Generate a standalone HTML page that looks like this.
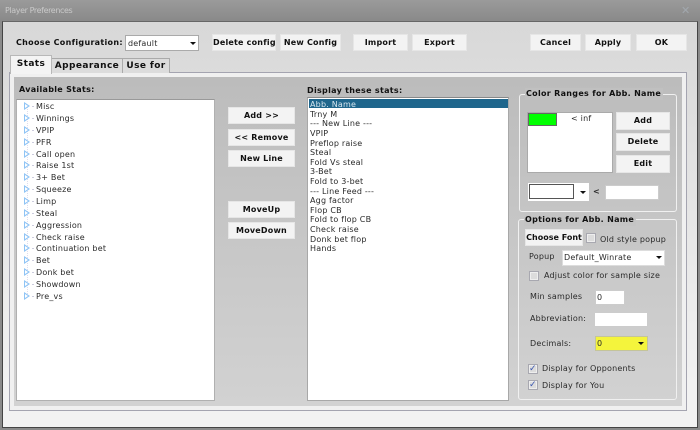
<!DOCTYPE html>
<html><head><meta charset="utf-8"><style>
html,body{margin:0;padding:0;width:700px;height:430px;overflow:hidden;background:#8c8c8c}
body{position:relative;font-family:"DejaVu Sans",sans-serif;font-size:8px;color:#2a2a2a;filter:blur(.3px)}
div{position:absolute;box-sizing:border-box}
.t{white-space:nowrap;line-height:12px;height:12px;margin-top:1px;font-size:8px;letter-spacing:.2px}
.b{font-weight:bold;color:#111;letter-spacing:.3px}
.btn{background:#f3f3f3;border:1px solid #e6e6e6;text-align:center;font-weight:bold;color:#111;white-space:nowrap;font-size:8px;letter-spacing:.2px;line-height:16px}
.ck{width:10px;height:10px;background:#dcdcdc;border:1px solid #a8a8b0;box-shadow:inset 0 0 0 1px #eee}
.ar{width:0;height:0;border-left:3.5px solid transparent;border-right:3.5px solid transparent;border-top:3.5px solid #111}
.tri{width:0;height:0;border-top:4.5px solid transparent;border-bottom:4.5px solid transparent;border-left:6px solid #8fc4f5}
.tri:after{content:"";position:absolute;left:-5px;top:-2.5px;border-top:2.5px solid transparent;border-bottom:2.5px solid transparent;border-left:3.5px solid #fff}
.tri:before{content:"";position:absolute;left:2px;top:0;width:2px;height:1px;background:#ccd}
.in{background:#fff;border:1px solid #b4b4b4}
.tab{background:#dcdcdc;border:1px solid #aaa;border-bottom:0;border-left:0;text-align:center;font-weight:bold;color:#111;line-height:15px;letter-spacing:.4px;font-size:9px;white-space:nowrap}
</style></head><body>
<div style="left:0;top:0;width:700px;height:430px;background:linear-gradient(#9a9a9a,#8a8a8a 20px,#8a8a8a)"></div>
<div class="t" style="left:5px;top:4px;color:#c9c9c9;letter-spacing:-.4px">Player Preferences</div>
<div class="t" style="left:681px;top:4px;color:#a2a8ae;font-size:11px;font-weight:bold">✕</div>
<div style="left:2px;top:21px;width:696px;height:407px;background:linear-gradient(#d8d8d8,#f2f2f2 90%);border:1px solid #444;border-top:1px solid #666"></div>

<div class="t b" style="left:16px;top:36px">Choose Configuration:</div>
<div class="in" style="left:125px;top:35px;width:74px;height:16px;border-color:#aaa"></div>
<div class="t" style="left:128px;top:37px">default</div>
<div class="ar" style="left:190px;top:42px"></div>
<div class="btn" style="left:212px;top:34px;width:64px;height:17px">Delete config</div>
<div class="btn" style="left:280px;top:34px;width:61px;height:17px">New Config</div>
<div class="btn" style="left:353px;top:34px;width:55px;height:17px">Import</div>
<div class="btn" style="left:412px;top:34px;width:55px;height:17px">Export</div>
<div class="btn" style="left:530px;top:34px;width:51px;height:17px">Cancel</div>
<div class="btn" style="left:585px;top:34px;width:46px;height:17px">Apply</div>
<div class="btn" style="left:636px;top:34px;width:51px;height:17px">OK</div>

<div style="left:9px;top:72px;width:678px;height:339px;background:#f0f0f0;border:1px solid #a4a4b0"></div>
<div style="left:14px;top:77px;width:668px;height:329px;background:linear-gradient(#bcbcbc,#d2d2d2)"></div>
<div class="tab" style="left:10px;top:55px;width:42px;height:19px;background:#f4f4f4;border:1px solid #b8b8b8;border-bottom:0;line-height:17px">Stats</div>
<div class="tab" style="left:52px;top:58px;width:71px;height:15px">Appearance</div>
<div class="tab" style="left:123px;top:58px;width:47px;height:15px">Use for</div>

<div class="t b" style="left:19px;top:83px">Available Stats:</div>
<div style="left:16px;top:99px;width:199px;height:302px;background:#fff;border:1px solid #b0b0b0;border-top-color:#999"></div>
<div style="left:27px;top:106px;width:0;height:190px;border-left:1px dotted #dde"></div>

<div class="tri" style="left:24px;top:102px"></div><div class="t" style="left:36px;top:100px">Misc</div>
<div class="tri" style="left:24px;top:114px"></div><div class="t" style="left:36px;top:112px">Winnings</div>
<div class="tri" style="left:24px;top:126px"></div><div class="t" style="left:36px;top:124px">VPIP</div>
<div class="tri" style="left:24px;top:138px"></div><div class="t" style="left:36px;top:136px">PFR</div>
<div class="tri" style="left:24px;top:150px"></div><div class="t" style="left:36px;top:148px">Call open</div>
<div class="tri" style="left:24px;top:161px"></div><div class="t" style="left:36px;top:159px">Raise 1st</div>
<div class="tri" style="left:24px;top:173px"></div><div class="t" style="left:36px;top:171px">3+ Bet</div>
<div class="tri" style="left:24px;top:185px"></div><div class="t" style="left:36px;top:183px">Squeeze</div>
<div class="tri" style="left:24px;top:197px"></div><div class="t" style="left:36px;top:195px">Limp</div>
<div class="tri" style="left:24px;top:209px"></div><div class="t" style="left:36px;top:207px">Steal</div>
<div class="tri" style="left:24px;top:221px"></div><div class="t" style="left:36px;top:219px">Aggression</div>
<div class="tri" style="left:24px;top:233px"></div><div class="t" style="left:36px;top:231px">Check raise</div>
<div class="tri" style="left:24px;top:244px"></div><div class="t" style="left:36px;top:242px">Continuation bet</div>
<div class="tri" style="left:24px;top:256px"></div><div class="t" style="left:36px;top:254px">Bet</div>
<div class="tri" style="left:24px;top:268px"></div><div class="t" style="left:36px;top:266px">Donk bet</div>
<div class="tri" style="left:24px;top:280px"></div><div class="t" style="left:36px;top:278px">Showdown</div>
<div class="tri" style="left:24px;top:292px"></div><div class="t" style="left:36px;top:290px">Pre_vs</div>

<div class="btn" style="left:228px;top:107px;width:67px;height:17px">Add &gt;&gt;</div>
<div class="btn" style="left:228px;top:129px;width:67px;height:17px">&lt;&lt; Remove</div>
<div class="btn" style="left:228px;top:150px;width:67px;height:17px">New Line</div>
<div class="btn" style="left:228px;top:201px;width:67px;height:17px">MoveUp</div>
<div class="btn" style="left:228px;top:222px;width:67px;height:17px">MoveDown</div>

<div class="t b" style="left:307px;top:84px">Display these stats:</div>
<div style="left:307px;top:97px;width:202px;height:304px;background:#fff;border:1px solid #a8a8a8;border-top-color:#888"></div>
<div style="left:309px;top:99px;width:199px;height:9px;background:#1f668c"></div>
<div class="t" style="left:310px;top:98px;color:#d6e6ef">Abb. Name</div>
<div class="t" style="left:310px;top:108px">Trny M</div>
<div class="t" style="left:310px;top:117px">--- New Line ---</div>
<div class="t" style="left:310px;top:127px">VPIP</div>
<div class="t" style="left:310px;top:137px">Preflop raise</div>
<div class="t" style="left:310px;top:146px">Steal</div>
<div class="t" style="left:310px;top:156px">Fold Vs steal</div>
<div class="t" style="left:310px;top:165px">3-Bet</div>
<div class="t" style="left:310px;top:175px">Fold to 3-bet</div>
<div class="t" style="left:310px;top:185px">--- Line Feed ---</div>
<div class="t" style="left:310px;top:194px">Agg factor</div>
<div class="t" style="left:310px;top:204px">Flop CB</div>
<div class="t" style="left:310px;top:213px">Fold to flop CB</div>
<div class="t" style="left:310px;top:223px">Check raise</div>
<div class="t" style="left:310px;top:233px">Donk bet flop</div>
<div class="t" style="left:310px;top:242px">Hands</div>

<div style="left:519px;top:94px;width:158px;height:118px;border:1px solid #f0f0f0;border-radius:3px"></div>
<div class="t b" style="left:525px;top:87px;background:#c0c0c0;padding:0 2px 0 1px">Color Ranges for Abb. Name</div>
<div style="left:527px;top:112px;width:86px;height:61px;background:#fff;border:1px solid #aaa"></div>
<div style="left:528px;top:113px;width:29px;height:13px;background:#0f0;border:1px solid #666"></div>
<div class="t" style="left:571px;top:112px">&lt; inf</div>
<div class="btn" style="left:616px;top:112px;width:54px;height:18px">Add</div>
<div class="btn" style="left:616px;top:133px;width:54px;height:18px">Delete</div>
<div class="btn" style="left:616px;top:155px;width:54px;height:18px">Edit</div>
<div style="left:528px;top:183px;width:61px;height:18px;background:#fff"></div>
<div style="left:529px;top:184px;width:45px;height:15px;background:#fff;border:1px solid #555"></div>
<div class="ar" style="left:580px;top:191px"></div>
<div class="t" style="left:593px;top:185px;font-weight:bold">&lt;</div>
<div class="in" style="left:605px;top:185px;width:54px;height:15px;border-color:#ccc"></div>

<div style="left:518px;top:219px;width:159px;height:181px;border:1px solid #f0f0f0;border-radius:3px"></div>
<div class="t b" style="left:524px;top:213px;background:#c4c4c4;padding:0 2px 0 1px">Options for Abb. Name</div>
<div class="btn" style="left:525px;top:229px;width:58px;height:17px;letter-spacing:0">Choose Font</div>
<div class="ck" style="left:586px;top:233px"></div>
<div class="t" style="left:600px;top:233px">Old style popup</div>
<div class="t" style="left:529px;top:250px">Popup</div>
<div class="in" style="left:562px;top:250px;width:103px;height:16px;border-color:#ddd"></div>
<div class="t" style="left:564px;top:251px">Default_Winrate</div>
<div class="ar" style="left:656px;top:256px"></div>
<div class="ck" style="left:529px;top:271px"></div>
<div class="t" style="left:544px;top:269px">Adjust color for sample size</div>
<div class="t" style="left:530px;top:290px">Min samples</div>
<div class="in" style="left:595px;top:290px;width:30px;height:15px;border-color:#ccc"></div>
<div class="t" style="left:597px;top:291px">0</div>
<div class="t" style="left:530px;top:312px">Abbreviation:</div>
<div class="in" style="left:594px;top:312px;width:54px;height:15px;border-color:#ccc"></div>
<div class="t" style="left:530px;top:337px">Decimals:</div>
<div style="left:595px;top:336px;width:53px;height:15px;background:#f4f43c;border:1px solid #c4c49a"></div>
<div class="t" style="left:597px;top:337px">0</div>
<div class="ar" style="left:638px;top:342px"></div>
<div class="ck" style="left:528px;top:364px"></div>
<div class="t" style="left:529px;top:362px;color:#3a56b0;font-size:9px;font-weight:bold">✓</div>
<div class="t" style="left:542px;top:362px">Display for Opponents</div>
<div class="ck" style="left:528px;top:380px"></div>
<div class="t" style="left:529px;top:378px;color:#3a56b0;font-size:9px;font-weight:bold">✓</div>
<div class="t" style="left:542px;top:379px">Display for You</div>
</body></html>
